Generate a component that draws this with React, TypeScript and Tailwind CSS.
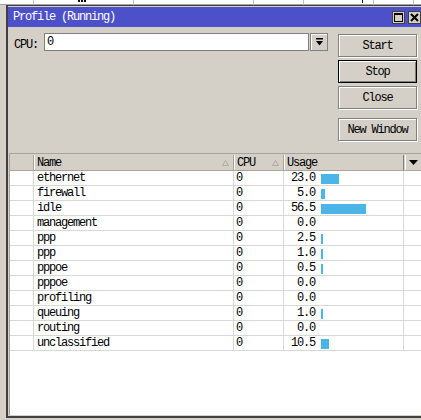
import React from "react";

const rows: [string, string, number][] = [
  ["ethernet", "23.0", 23.0],
  ["firewall", "5.0", 5.0],
  ["idle", "56.5", 56.5],
  ["management", "0.0", 0],
  ["ppp", "2.5", 2.5],
  ["ppp", "1.0", 1.0],
  ["pppoe", "0.5", 0.5],
  ["pppoe", "0.0", 0],
  ["profiling", "0.0", 0],
  ["queuing", "1.0", 1.0],
  ["routing", "0.0", 0],
  ["unclassified", "10.5", 10.5],
];

const font = { fontFamily: '"Liberation Mono", "DejaVu Sans Mono", monospace' };

function Btn({ label, def }: { label: string; def?: boolean }) {
  return (
    <div
      className={
        "h-[23px] w-[79px] flex items-center justify-center text-[12px] tracking-[-1.2px] text-black bg-[#d4d0c8] " +
        (def
          ? "border border-black shadow-[inset_1px_1px_0_#ffffff,inset_-1px_-1px_0_#808080]"
          : "border border-[#808080] shadow-[inset_1px_1px_0_#ffffff,1px_1px_0_#ffffff]")
      }
    >
      {label}
    </div>
  );
}

function SortTri() {
  return (
    <svg width="7" height="6" viewBox="0 0 7 6" className="shrink-0">
      <path d="M3.5 0.5 L6.5 5.5 L0.5 5.5 Z" fill="none" stroke="#b0aca4" strokeWidth="1" />
    </svg>
  );
}

export default function App() {
  return (
    <div className="relative w-[421px] h-[420px] overflow-hidden bg-[#d4d0c8]" style={font}>
      {/* window behind (top strip) */}
      <div className="absolute left-0 top-0 w-[421px] h-[5px] bg-white border-b border-[#a0a0a0]">
        <div className="absolute left-[33px] top-0 h-[5px] w-px bg-[#c0c0c0]" />
        <div className="absolute left-[133px] top-0 h-[5px] w-px bg-[#c0c0c0]" />
        <div className="absolute left-[253px] top-0 h-[5px] w-px bg-[#c0c0c0]" />
        <div className="absolute left-[303px] top-0 h-[5px] w-px bg-[#c0c0c0]" />
        <div className="absolute left-[373px] top-0 h-[5px] w-px bg-[#c0c0c0]" />
        <div className="absolute left-[413px] top-0 h-[5px] w-px bg-[#c0c0c0]" />
        <div className="absolute left-[78px] top-0 h-[2px] w-[8px] flex gap-[1px]">
          <div className="w-[2px] h-[2px] bg-black" />
          <div className="w-[2px] h-[2px] bg-black" />
          <div className="w-[2px] h-[2px] bg-black" />
        </div>
        <div className="absolute left-[362px] top-0 h-[3px] w-[1px] bg-black" />
      </div>

      {/* the window */}
      <div className="absolute left-[6px] top-[5px] w-[430px] h-[413px] border-l-2 border-t border-b-2 border-[#404040] bg-[#d4d0c8] flex flex-col">
        <div className="border-t border-[#d4d0c8] flex-1 flex flex-col">
          {/* title bar */}
          <div className="h-[20px] bg-[#4c51c9] flex items-center pl-[5px] pr-[15px]">
            <span className="text-white text-[12px] tracking-[-1.2px] flex-1">Profile (Running)</span>
            <div className="flex gap-[3px]">
              <div className="w-[13px] h-[13px] bg-[#d4d0c8] border border-[#404040] flex items-center justify-center">
                <div className="w-[9px] h-[9px] border border-black border-t-2" />
              </div>
              <div className="w-[13px] h-[13px] bg-[#d4d0c8] border border-[#404040] flex items-center justify-center">
                <svg width="9" height="9" viewBox="0 0 9 9">
                  <path d="M1 1 L8 8 M8 1 L1 8" stroke="black" strokeWidth="2" />
                </svg>
              </div>
            </div>
          </div>

          {/* controls */}
          <div className="flex pt-[6px] pr-[19px]">
            <div className="flex-1 flex items-start pl-[6px]">
              <span className="text-[12px] tracking-[-1.2px] text-black mt-[3px] w-[30px]">CPU:</span>
              <div className="h-[18px] w-[265px] bg-white border border-[#808080] flex items-center pl-[2px] text-[12px] text-black">
                0
              </div>
              <div className="h-[18px] w-[18px] ml-[1px] bg-[#d4d0c8] border border-[#808080] shadow-[inset_1px_1px_0_#ffffff] flex items-center justify-center">
                <svg width="7" height="8" viewBox="0 0 7 8">
                  <rect x="0" y="0" width="7" height="1.5" fill="black" />
                  <path d="M0 3 L7 3 L3.5 7.5 Z" fill="black" />
                </svg>
              </div>
            </div>
            <div className="flex flex-col gap-[3px] mt-[1px]">
              <Btn label="Start" />
              <Btn label="Stop" def />
              <Btn label="Close" />
              <div className="h-[3px]" />
              <Btn label="New Window" />
            </div>
          </div>

          {/* table */}
          <div className="mt-[12px] flex-1 ml-[1px] border-l border-t border-[#a8a49c] bg-white flex flex-col mb-[1px]">
            <div className="border-t border-[#d4d0c8] flex-1 flex flex-col">
              <div className="h-[16px] flex bg-[#d4d0c8] border-b border-[#a8a49c] text-[12px] tracking-[-1.2px] text-black">
                <div className="w-[23px]" />
                <div className="w-[200px] border-l border-[#a8a49c] shadow-[inset_1px_0_0_#ffffff] flex items-center justify-between pl-[3px] pr-[4px]">
                  <span>Name</span>
                  <SortTri />
                </div>
                <div className="w-[50px] border-l border-[#a8a49c] shadow-[inset_1px_0_0_#ffffff] flex items-center justify-between pl-[3px] pr-[4px]">
                  <span>CPU</span>
                  <SortTri />
                </div>
                <div className="w-[120px] border-l border-[#a8a49c] shadow-[inset_1px_0_0_#ffffff] flex items-center pl-[3px]">
                  <span>Usage</span>
                </div>
                <div className="w-[3px] border-l border-[#808080] border-r border-r-white" />
                <div className="flex-1 flex items-center pl-[3px]">
                  <svg width="9" height="5" viewBox="0 0 9 5">
                    <path d="M0 0 L9 0 L4.5 5 Z" fill="black" />
                  </svg>
                </div>
              </div>
              {rows.map(([name, usage, v], i) => {
                const w = v > 0 ? Math.max(2, Math.round(v * 0.8)) : 0;
                return (
                  <div
                    key={i}
                    className="h-[15px] flex border-b border-[#d8d8d8] text-[12px] tracking-[-1.2px] text-black"
                  >
                    <div className="w-[23px]" />
                    <div className="w-[200px] border-l border-[#d8d8d8] flex items-center pl-[3px]">{name}</div>
                    <div className="w-[50px] border-l border-[#d8d8d8] flex items-center pl-[2px]">0</div>
                    <div className="w-[120px] border-l border-[#d8d8d8] flex items-center">
                      <span className="w-[31px] text-right">{usage}</span>
                      <div className="ml-[6px] h-[10px] mt-[2px] bg-[#4cb5e8]" style={{ width: w }} />
                    </div>
                    <div className="flex-1 border-l border-[#d8d8d8]" />
                  </div>
                );
              })}
              <div className="flex-1" />
            </div>
          </div>
        </div>
      </div>
    </div>
  );
}
